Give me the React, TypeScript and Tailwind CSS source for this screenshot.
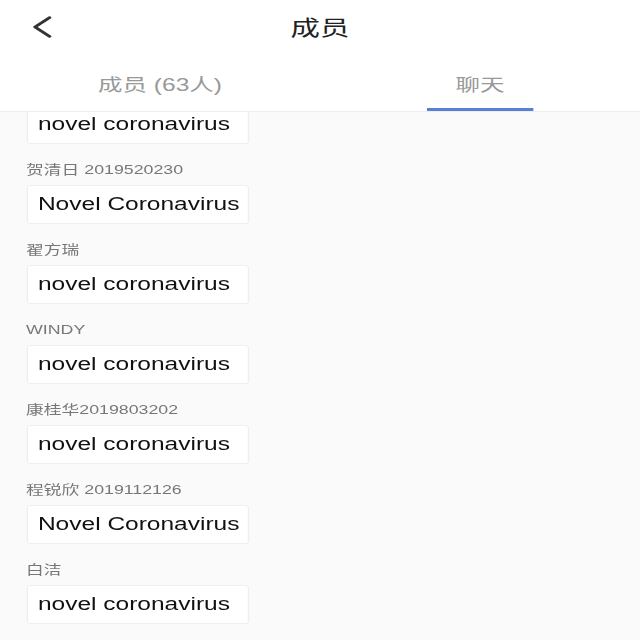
// App.tsx
// Group members / chat screen

const font = { fontFamily: '"Liberation Sans", "Noto Sans CJK SC", sans-serif' };

const messages = [
  { name: '', text: 'novel coronavirus' },
  { name: '贺清日 2019520230', text: 'Novel Coronavirus' },
  { name: '翟方瑞', text: 'novel coronavirus' },
  { name: 'WINDY', text: 'novel coronavirus' },
  { name: '康桂华2019803202', text: 'novel coronavirus' },
  { name: '程锐欣 2019112126', text: 'Novel Coronavirus' },
  { name: '白洁', text: 'novel coronavirus' },
];

function BackIcon() {
  return (
    <svg width="14" height="22" viewBox="0 0 14 22" fill="none">
      <path d="M12.5 1.5 L2 11 L12.5 20.5" stroke="#333" strokeWidth="2.4" strokeLinecap="round" strokeLinejoin="round" />
    </svg>
  );
}

export default function App() {
  return (
    <div className="h-[640px] w-[640px] overflow-hidden bg-[#fafafa]" style={font}>
      {/* the reference is stretched horizontally, so the page is drawn narrow and widened */}
      <div className="flex h-[640px] w-[457.14px] origin-top-left scale-x-[1.4] flex-col">
        <header className="bg-white">
          <div className="relative flex h-[54px] items-center justify-center">
            <button className="absolute left-[23px] top-[16px] flex items-center">
              <BackIcon />
            </button>
            <h1 className="text-[21px] leading-none text-[#222]">成员</h1>
          </div>
          <div className="flex h-[58px] border-b border-[#eeeeee]">
            <div className="flex flex-1 items-center justify-center pt-[6px] text-[17.5px] text-[#999]">
              成员 (63人)
            </div>
            <div className="relative flex flex-1 items-center justify-center pt-[6px] text-[17.5px] text-[#999]">
              聊天
              <span className="absolute bottom-0 left-1/2 h-[3px] w-[76px] -translate-x-1/2 bg-[#5b7fd6]" />
            </div>
          </div>
        </header>

        <div className="flex-1 overflow-hidden">
          <div className="-mt-[31px] px-[18.6px]">
            {messages.map((m, i) => (
              <div key={i} className="mb-[17px]">
                <div className="h-[18px] whitespace-pre text-[12.7px] leading-[18px] text-[#777]">{m.name}</div>
                <div className="mt-[6px] flex h-[39px] w-[159.5px] items-center rounded-[3px] border border-[#efefef] bg-white pl-[7.5px] text-[17.5px] text-[#111]">
                  {m.text}
                </div>
              </div>
            ))}
          </div>
        </div>
      </div>
    </div>
  );
}
